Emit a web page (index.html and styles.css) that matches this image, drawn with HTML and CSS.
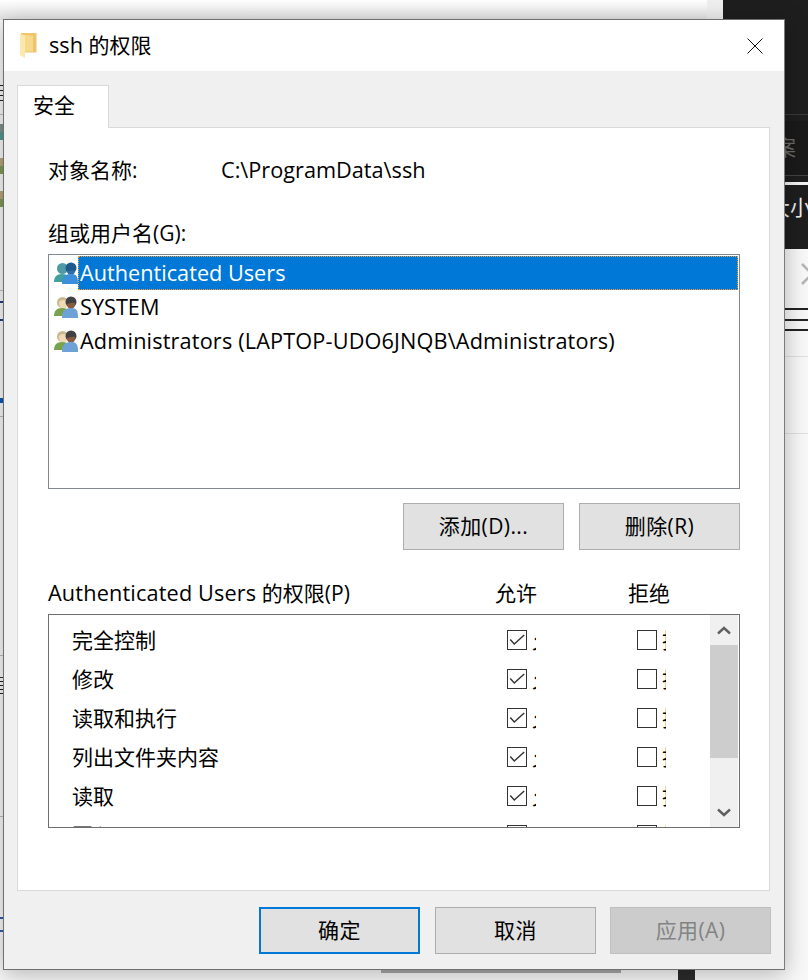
FILE: index.html
```html
<!DOCTYPE html>
<html lang="zh-CN">
<head>
<meta charset="utf-8">
<title>ssh 的权限</title>
<link rel="stylesheet" href="styles.css">
</head>
<body>
<svg width="0" height="0" class="defs">
  <defs>
    <symbol id="users" viewBox="0 0 24 22">
      <circle cx="8.500" cy="6.500" r="5.500" fill="#c9b98e"/>
      <path d="M5 6c1-2 5-3 8-1l.5 3c0 3-2 5-4.500 5S5 10 5 6z" fill="#efd9b6"/>
      <path d="M0 20c0-5 2.500-8 8-8s8 3 8 8z" fill="#79a24d"/>
      <circle cx="17" cy="6" r="5.500" fill="#3f4144"/>
      <path d="M13 8c1.500-.5 6.500-2 8-1v1c0 3-1.800 5-4 5s-4-2-4-5z" fill="#8a5c3c"/>
      <path d="M8 22c0-7 3-10 9-10s7 3 7 10z" fill="#6ea2d6"/>
    </symbol>
    <symbol id="users-sel" viewBox="0 0 24 22">
      <circle cx="8.500" cy="6.500" r="5.500" fill="#4f9aa6"/>
      <path d="M0 20c0-5 2.500-8 8-8s8 3 8 8z" fill="#3fa09e"/>
      <circle cx="17" cy="6" r="5.500" fill="#20598c"/>
      <path d="M13 9c1.500-.5 6.500-1 8 0 0 2.500-1.800 4-4 4s-4-1.500-4-4z" fill="#2c6ea8"/>
      <path d="M8 22c0-7 3-10 9-10s7 3 7 10z" fill="#3c8fd8"/>
    </symbol>
    <symbol id="tick" viewBox="0 0 20 20">
      <path d="M2.500 9.500L7 14.500 18 4.500" fill="none" stroke="#333" stroke-width="1.600"/>
    </symbol>
  </defs>
</svg>

<div class="desk">
  <div class="desk-top"></div>
  <div class="desk-dark"></div>
  <div class="side-frag">案</div>
  <div class="side-bar"><span class="side-text">大小</span></div>
  <div class="side-pane">
    <svg class="side-x" width="22" height="22" viewBox="0 0 22 22"><path d="M1 1l20 20M21 1L1 21" fill="none" stroke="#b5b5b5" stroke-width="2.500"/></svg>
    <span class="side-menu"><i></i><i></i><i></i></span>
  </div>
  <div class="left-strip">
    <i class="mk-lines"></i><i class="mk-rule r1"></i><i class="mk-icon i1"></i><i class="mk-icon i2"></i><i class="mk-icon i3"></i>
    <i class="mk-rule r2"></i><i class="mk-text t1"></i><i class="mk-tick"></i><i class="mk-rule r3"></i>
    <i class="mk-rule r4"></i><i class="mk-lines l2"></i><i class="mk-rule r5"></i><i class="mk-rule r6"></i><i class="mk-text t3"></i>
  </div>
  <div class="bottom-bar"></div>
  <div class="bottom-dark"></div>
</div>

<main class="dialog">
  <header class="titlebar">
    <svg class="folder" width="17" height="25" viewBox="0 0 17 25">
      <path d="M1 0h15.500v19.500H5z" fill="#efc56c"/>
      <path d="M0 1l13 2v15.500H5z" fill="#f6d98c"/>
      <path d="M0 1l5 2v22l-5-3z" fill="#fbe8ae"/>
    </svg>
    <span class="title"><span class="latin">ssh</span> 的权限</span>
    <svg class="close" width="16" height="16" viewBox="0 0 16 16">
      <path d="M.5.500l15 15M15.500.500l-15 15" stroke="#111" stroke-width="1" fill="none"/>
    </svg>
  </header>

  <div class="content">
    <div class="tabs"><div class="tab">安全</div></div>
    <section class="panel">
      <div class="object-row">
        <span class="object-label">对象名称:</span>
        <span class="latin">C:\ProgramData\ssh</span>
      </div>
      <div class="group-label">组或用户名(G):</div>
      <ul class="users">
        <li class="user">
          <svg class="user-icon"><use href="#users-sel"/></svg>
          <span class="user-name selected latin">Authenticated Users</span>
        </li>
        <li class="user">
          <svg class="user-icon"><use href="#users"/></svg>
          <span class="user-name latin">SYSTEM</span>
        </li>
        <li class="user">
          <svg class="user-icon"><use href="#users"/></svg>
          <span class="user-name latin wide">Administrators (LAPTOP-UDO6JNQB\Administrators)</span>
        </li>
      </ul>
      <div class="user-actions">
        <button class="btn">添加(D)...</button>
        <button class="btn">删除(R)</button>
      </div>
      <div class="perm-head">
        <span class="perm-title"><span class="latin wide">Authenticated Users</span> 的权限(P)</span>
        <span class="perm-allow">允许</span>
        <span class="perm-deny">拒绝</span>
      </div>
      <div class="perms">
        <div class="perm-rows">
          <div class="perm"><span class="perm-name">完全控制</span><span class="box on"><svg><use href="#tick"/></svg></span><span class="clip">允许</span><span class="box deny"></span><span class="clip">拒绝</span></div>
          <div class="perm"><span class="perm-name">修改</span><span class="box on"><svg><use href="#tick"/></svg></span><span class="clip">允许</span><span class="box deny"></span><span class="clip">拒绝</span></div>
          <div class="perm"><span class="perm-name">读取和执行</span><span class="box on"><svg><use href="#tick"/></svg></span><span class="clip">允许</span><span class="box deny"></span><span class="clip">拒绝</span></div>
          <div class="perm"><span class="perm-name">列出文件夹内容</span><span class="box on"><svg><use href="#tick"/></svg></span><span class="clip">允许</span><span class="box deny"></span><span class="clip">拒绝</span></div>
          <div class="perm"><span class="perm-name">读取</span><span class="box on"><svg><use href="#tick"/></svg></span><span class="clip">允许</span><span class="box deny"></span><span class="clip">拒绝</span></div>
          <div class="perm"><span class="perm-name">写入</span><span class="box on"><svg><use href="#tick"/></svg></span><span class="clip">允许</span><span class="box deny"></span><span class="clip">拒绝</span></div>
        </div>
        <div class="scrollbar">
          <div class="sb-btn"><svg width="14" height="9" viewBox="0 0 14 9"><path d="M1 7.500l6-5.500 6 5.500" fill="none" stroke="#606060" stroke-width="2.400"/></svg></div>
          <div class="sb-thumb"></div>
          <div class="sb-track"></div>
          <div class="sb-btn"><svg width="14" height="9" viewBox="0 0 14 9"><path d="M1 1.500l6 5.500 6-5.500" fill="none" stroke="#606060" stroke-width="2.400"/></svg></div>
        </div>
      </div>
    </section>
    <footer class="footer">
      <button class="btn default">确定</button>
      <button class="btn">取消</button>
      <button class="btn disabled">应用(A)</button>
    </footer>
  </div>
</main>
</body>
</html>
```
FILE: styles.css
```css
* { box-sizing: border-box; }
html, body { margin: 0; padding: 0; }
body {
  position: relative;
  width: 808px;
  height: 980px;
  overflow: hidden;
  background: #fff;
  font-family: "Open Sans", "Noto Sans CJK SC", sans-serif;
  font-size: 21px;
  color: #000;
}
.defs { position: absolute; }
.latin { font-size: 21.7px; }
.wide { letter-spacing: .15px; }

/* Background windows behind the dialog */
.desk { position: absolute; inset: 0; background: #f8f8f8; }
.desk-top {
  position: absolute; left: 0; top: 0; width: 723px; height: 20px;
  background: linear-gradient(#fff, #e4e4e4);
  border-right: 16px solid #efefef;
}
.desk-dark { position: absolute; left: 723px; top: 0; width: 85px; height: 182px; background: #1e1e1e; }
.desk-dark::before {
  content: ""; position: absolute; left: 0; right: 0; top: 114px; height: 7px;
  border-top: 1px solid #3a3a3a; border-bottom: 1px solid #3a3a3a;
}
.desk-dark::after {
  content: ""; position: absolute; left: 0; right: 0; top: 121px; height: 54px;
  background: #1a1a1a; border-bottom: 1px solid #444;
}
.side-frag { position: absolute; left: 775px; top: 133px; font-size: 21px; line-height: 28px; color: #6a6a6a; }
.side-bar { position: absolute; left: 723px; top: 182px; width: 85px; height: 67px; background: #1e1e1e; border-top: 3px solid #f4f4f4; }
.side-text { position: absolute; left: 46px; top: 8px; color: #eee; line-height: 28px; white-space: nowrap; }
.side-pane { position: absolute; left: 723px; top: 249px; width: 85px; height: 731px; }
.side-x { position: absolute; left: 78px; top: 14px; }
.side-menu { position: absolute; left: 62px; top: 59px; width: 23px; display: flex; flex-direction: column; gap: 8.500px; padding-bottom: 25px; border-bottom: 1px solid #e0e0e0; }
.side-menu i { display: block; height: 2px; background: #222; }
.side-pane::after { content: ""; position: absolute; left: 62px; top: 184px; width: 23px; height: 1px; background: #e0e0e0; }

.left-strip { position: absolute; left: 0; top: 0; width: 4px; height: 980px; }
.left-strip i { position: absolute; left: 0; width: 4px; display: block; }
.mk-lines { top: 85px; height: 17px; background: repeating-linear-gradient(#222 0 1px, transparent 1px 5px); }
.mk-lines.l2 { top: 681px; height: 13px; background: repeating-linear-gradient(#222 0 1px, transparent 1px 4px); }
.mk-rule { height: 1px; background: #bdbdbd; }
.r1 { top: 114px; }
.r2 { top: 290px; }
.r3 { top: 416px; }
.r4 { top: 655px; }
.r5 { top: 677px; background: #333; }
.r6 { top: 816px; }
.mk-icon { height: 16px; background: linear-gradient(#b8a678 50%, #7e9c50 50%); }
.i1 { top: 124px; background: linear-gradient(#7f918c 50%, #4f9a90 50%); }
.i2 { top: 158px; }
.i3 { top: 191px; }
.mk-text { height: 20px; border-top: 2px solid #1a3f88; border-bottom: 2px solid #1a3f88; }
.t1 { top: 301px; }
.t3 { top: 917px; height: 15px; border-color: #2a5fb0; }
.mk-tick { top: 398px; height: 5px; background: #0a58b8; }

.bottom-bar { position: absolute; left: 381px; top: 968px; width: 240px; height: 5px; background: #a8a8a8; }
.bottom-dark { position: absolute; left: 678px; top: 968px; width: 17px; height: 12px; background: #2b2b2b; }

/* Dialog window */
.dialog {
  position: absolute;
  left: 3px;
  top: 19px;
  width: 782px;
  height: 951px;
  display: flex;
  flex-direction: column;
  background: #f0f0f0;
  border: 1px solid #6f6f6f;
  border-right-color: #7b7b7b;
  box-shadow: 0 4px 22px rgba(0, 0, 0, .28);
}
.titlebar {
  height: 51px;
  flex: none;
  display: flex;
  align-items: center;
  padding: 0 21px 0 16px;
  background: #fff;
}
.folder { flex: none; }
.title { margin: -2px 0 0 12px; flex: 1; line-height: 28px; }
.content { flex: 1; display: flex; flex-direction: column; padding: 14px 14px 0 13px; }
.tabs { display: flex; height: 42px; flex: none; }
.tab {
  width: 92px;
  height: 43px;
  padding-left: 15px;
  background: #fff;
  border: 1px solid #d9d9d9;
  border-bottom: 0;
  line-height: 38px;
  position: relative;
  z-index: 1;
}
.panel {
  width: 753px;
  height: 764px;
  flex: none;
  padding: 0 29px 0 30px;
  background: #fff;
  border: 1px solid #d9d9d9;
}
.object-row { display: flex; height: 28px; margin-top: 28px; line-height: 28px; }
.object-label { width: 173px; }
.group-label { height: 28px; line-height: 28px; margin-top: 35px; }
.users {
  list-style: none;
  margin: 7px 0 0;
  padding: 1px;
  height: 235px;
  border: 1px solid #828790;
}
.user { display: flex; align-items: center; height: 34px; }
.user-icon { width: 24px; height: 22px; margin-left: 4px; flex: none; }
.user-name { height: 34px; padding: 0 2px; line-height: 33px; white-space: nowrap; }
.selected {
  flex: 1;
  background: #0078d7;
  color: #fff;
  outline: 1px dotted #f0a040;
  outline-offset: -1px;
}
.user-actions { display: flex; justify-content: flex-end; gap: 15px; margin-top: 14px; }
.btn {
  width: 161px;
  height: 47px;
  padding: 0 0 4px;
  font: inherit;
  letter-spacing: .4px;
  color: #000;
  background: #e1e1e1;
  border: 1px solid #adadad;
}
.perm-head { display: flex; height: 28px; line-height: 28px; margin-top: 29px; }
.perm-title { width: 447px; }
.perm-allow { width: 133px; }
.perms {
  display: flex;
  height: 214px;
  margin-top: 7px;
  border: 1px solid #6e6e6e;
  overflow: hidden;
}
.perm-rows { flex: 1; padding-top: 5.500px; }
.perm { display: flex; align-items: center; height: 39px; line-height: 28px; }
.perm-name { width: 458px; padding-left: 23px; }
.box {
  width: 20px;
  height: 20px;
  flex: none;
  border: 1px solid #333;
  background: #fff;
}
.box svg { display: block; width: 18px; height: 18px; }
.clip { width: 4px; margin-left: 5px; overflow: hidden; white-space: nowrap; flex: none; }
.box.deny { margin-left: 101px; }
.scrollbar { width: 28px; margin-right: 1px; flex: none; display: flex; flex-direction: column; background: #f0f0f0; }
.sb-btn { height: 30px; flex: none; display: flex; align-items: center; justify-content: center; }
.sb-thumb { height: 113px; flex: none; background: #cdcdcd; }
.sb-track { flex: 1; }
.footer { display: flex; justify-content: flex-end; padding: 16px 0 0; margin-right: -1px; }
.footer .btn { width: 161px; }
.footer .btn + .btn { margin-left: 15px; }
.footer .btn + .disabled { margin-left: 14px; }
.default { border: 2px solid #0078d7; }
.disabled { background: #ccc; color: #838383; border-color: #bfbfbf; }
```
